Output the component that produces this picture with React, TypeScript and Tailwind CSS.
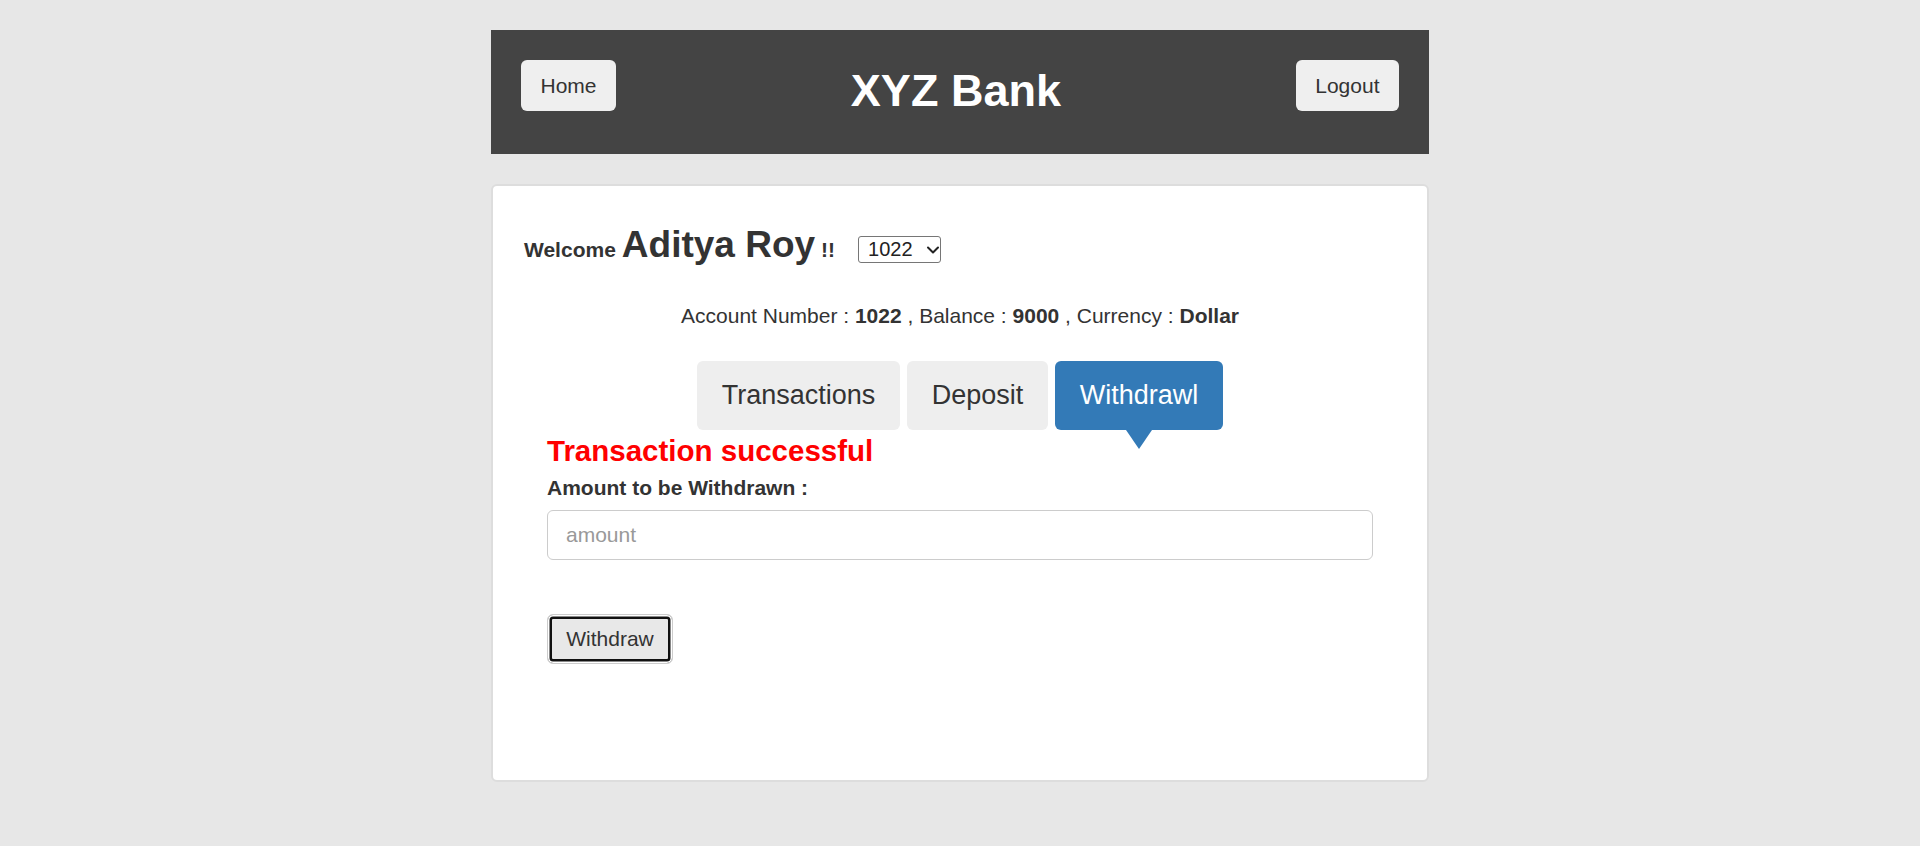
import React, { useState } from 'react';
import { ChevronDown } from 'lucide-react';

const tabs = ['Transactions', 'Deposit', 'Withdrawl'];

export default function App() {
  const [active, setActive] = useState('Withdrawl');
  const [account, setAccount] = useState('1022');
  const [amount, setAmount] = useState('');

  return (
    <div className="min-h-screen bg-[#e7e7e7] pt-[30px] font-['Liberation_Sans',Arial,sans-serif] text-[#333]">
      <div className="mx-auto w-[938px]">
        {/* header */}
        <div className="flex h-[124px] items-start justify-between bg-[#444444] px-[30px] pt-[30px]">
          <button className="h-[51px] rounded-[6px] bg-[#efefef] px-[19.5px] text-[21px] leading-[30px] text-[#333]">
            Home
          </button>
          <h2 className="mt-[5px] text-[45px] font-bold leading-[52px] text-white">XYZ Bank</h2>
          <button className="h-[51px] rounded-[6px] bg-[#efefef] px-[19.5px] text-[21px] leading-[30px] text-[#333]">
            Logout
          </button>
        </div>

        {/* account card */}
        <div className="mt-[30px] h-[598px] rounded-[6px] border-2 border-[#dddddd] bg-white px-[31px] pt-[40px]">
          <div className="flex items-baseline">
            <span className="text-[21px] font-bold leading-[21px]">Welcome</span>
            <span className="ml-[6px] text-[37px] font-bold leading-[37px]">Aditya Roy</span>
            <span className="ml-[6px] text-[21px] font-bold leading-[21px]">!!</span>
            <div className="relative ml-[23px] mt-[10px] self-center">
              <select
                value={account}
                onChange={(e) => setAccount(e.target.value)}
                className="h-[27px] w-[83px] appearance-none rounded-[3px] border border-[#767676] bg-white pl-[9px] text-[20px] leading-[25px] text-[#222]"
              >
                <option value="1022">1022</option>
                <option value="1023">1023</option>
              </select>
              <ChevronDown className="pointer-events-none absolute right-[-2px] top-[3.5px] h-[20px] w-[20px] text-[#222]" strokeWidth={2.4} />
            </div>
          </div>

          <p className="mt-[38px] text-center text-[21px] leading-[30px]">
            Account Number : <b>{account}</b> , Balance : <b>9000</b> , Currency : <b>Dollar</b>
          </p>

          <div className="px-[23px]">
            <div className="mt-[30px] flex justify-center gap-[6.5px]">
              {tabs.map((t) => (
                <button
                  key={t}
                  onClick={() => setActive(t)}
                  className={`relative flex h-[69px] items-center rounded-[6px] px-[25px] text-[27px] ${
                    active === t ? 'bg-[#337ab7] text-white' : 'bg-[#eeeeee] text-[#333]'
                  }`}
                >
                  {t}
                  {active === t && (
                    <span className="absolute left-1/2 top-full -translate-x-1/2 border-x-[13.5px] border-t-[19px] border-x-transparent border-t-[#337ab7]" />
                  )}
                </button>
              ))}
            </div>

            <h4 className="mt-[4px] text-[29.5px] font-bold leading-[34px] text-[#ff0000]">Transaction successful</h4>
            <label className="mt-[8px] block text-[21px] font-bold leading-[24px]">Amount to be Withdrawn :</label>
            <input
              type="text"
              value={amount}
              onChange={(e) => setAmount(e.target.value)}
              placeholder="amount"
              className="mt-[10px] block h-[50px] w-full rounded-[6px] border-[1.5px] border-[#cccccc] px-[18px] text-[21px] text-[#555] outline-none placeholder:text-[#999]"
            />
            <button className="mt-[54px] h-[50px] w-[126px] rounded-[6px] border border-[#cccccc] bg-[#e8e8e8] text-[21px] text-[#333] shadow-[inset_0_0_0_1.5px_#fff,inset_0_0_0_4px_#111]">
              Withdraw
            </button>
          </div>
        </div>
      </div>
    </div>
  );
}
